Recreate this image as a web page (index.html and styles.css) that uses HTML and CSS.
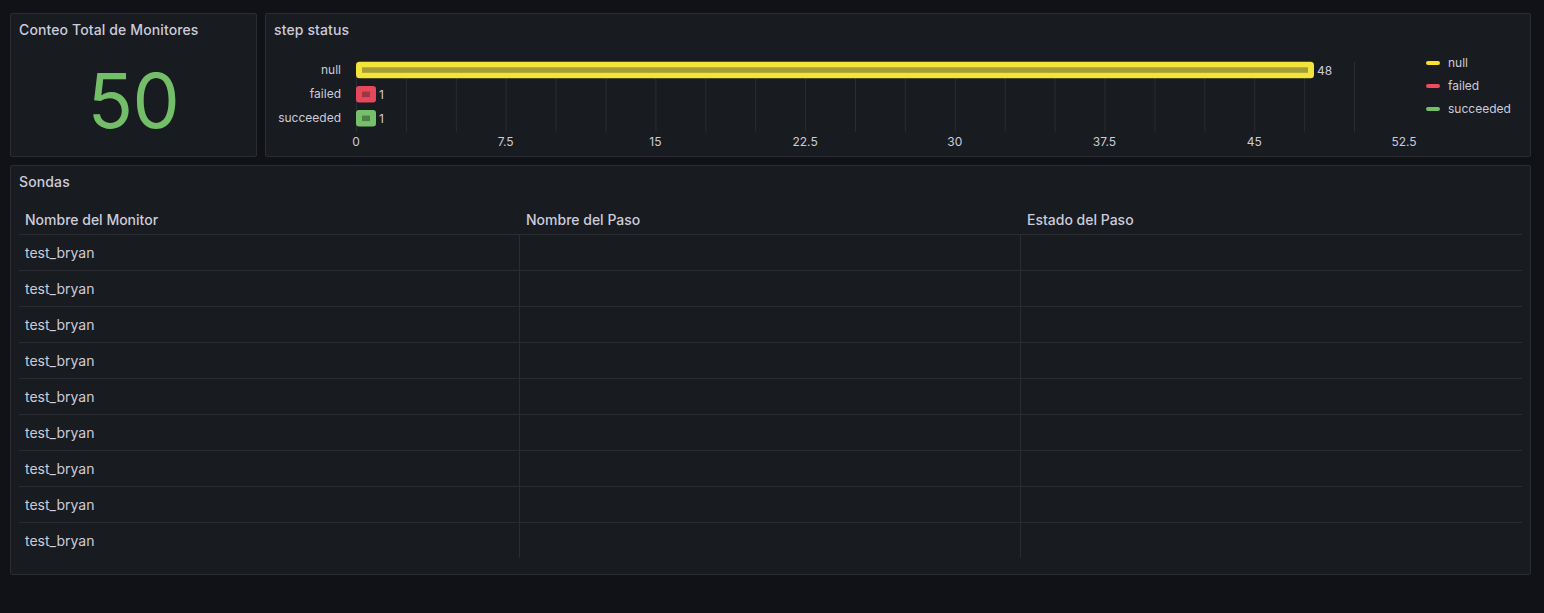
FILE: index.html
```html
<!DOCTYPE html>
<html lang="es">
<head>
<meta charset="utf-8">
<title>Dashboard</title>
<link rel="stylesheet" href="styles.css">
</head>
<body>
<div class="dash">
  <div class="row-top">
    <section class="panel stat-panel">
      <header class="panel-header"><h2 class="panel-title">Conteo Total de Monitores</h2></header>
      <div class="stat-body"><span class="stat-value">50</span></div>
    </section>
    <section class="panel chart-panel">
      <header class="panel-header"><h2 class="panel-title">step status</h2></header>
      <div class="chart-body">
        <svg class="chart" width="1152" height="110" viewBox="0 0 1152 110">
          <g class="grid" stroke="#2a2c31" stroke-width="1">
            <line x1="82.5" y1="16" x2="82.5" y2="86"/>
            <line x1="132.4" y1="16" x2="132.4" y2="86"/>
            <line x1="182.3" y1="16" x2="182.3" y2="86"/>
            <line x1="232.2" y1="16" x2="232.2" y2="86"/>
            <line x1="282.1" y1="16" x2="282.1" y2="86"/>
            <line x1="332" y1="16" x2="332" y2="86"/>
            <line x1="381.9" y1="16" x2="381.9" y2="86"/>
            <line x1="431.8" y1="16" x2="431.8" y2="86"/>
            <line x1="481.7" y1="16" x2="481.7" y2="86"/>
            <line x1="531.6" y1="16" x2="531.6" y2="86"/>
            <line x1="581.5" y1="16" x2="581.5" y2="86"/>
            <line x1="631.4" y1="16" x2="631.4" y2="86"/>
            <line x1="681.3" y1="16" x2="681.3" y2="86"/>
            <line x1="731.2" y1="16" x2="731.2" y2="86"/>
            <line x1="781.1" y1="16" x2="781.1" y2="86"/>
            <line x1="831" y1="16" x2="831" y2="86"/>
            <line x1="880.9" y1="16" x2="880.9" y2="86"/>
            <line x1="930.8" y1="16" x2="930.8" y2="86"/>
            <line x1="980.7" y1="16" x2="980.7" y2="86"/>
            <line x1="1030.6" y1="16" x2="1030.6" y2="86"/>
            <line x1="1080.5" y1="16" x2="1080.5" y2="86"/>
          </g>
          <g class="ylabels">
            <text x="67" y="28" text-anchor="end">null</text>
            <text x="67" y="52" text-anchor="end">failed</text>
            <text x="67" y="76" text-anchor="end">succeeded</text>
          </g>
          <g class="bars">
            <rect x="82" y="15.7" width="958" height="16.6" rx="3.5" fill="#f2e43a"/>
            <rect x="88" y="21.3" width="946" height="5.5" fill="#a39c37"/>
            <rect x="82" y="40" width="20" height="16.6" rx="3" fill="#e5485b"/>
            <rect x="88" y="45.6" width="8" height="5.5" fill="#9c3846"/>
            <rect x="82" y="64" width="20" height="16.6" rx="3" fill="#75c06a"/>
            <rect x="88" y="69.6" width="8" height="5.5" fill="#4f7f49"/>
          </g>
          <g class="vlabels">
            <text x="1043" y="28.5">48</text>
            <text x="105" y="52.5">1</text>
            <text x="105" y="76.5">1</text>
          </g>
          <g class="xlabels" text-anchor="middle">
            <text x="82" y="100">0</text>
            <text x="231.7" y="100">7.5</text>
            <text x="381.4" y="100">15</text>
            <text x="531.1" y="100">22.5</text>
            <text x="680.8" y="100">30</text>
            <text x="830.5" y="100">37.5</text>
            <text x="980.2" y="100">45</text>
            <text x="1130" y="100">52.5</text>
          </g>
        </svg>
        <ul class="legend">
          <li class="legend-item"><span class="swatch swatch-yellow"></span>null</li>
          <li class="legend-item"><span class="swatch swatch-red"></span>failed</li>
          <li class="legend-item"><span class="swatch swatch-green"></span>succeeded</li>
        </ul>
      </div>
    </section>
  </div>
  <section class="panel table-panel">
    <header class="panel-header"><h2 class="panel-title">Sondas</h2></header>
    <div class="table-body">
      <div class="table">
        <div class="thead">
          <div class="th">Nombre del Monitor</div>
          <div class="th">Nombre del Paso</div>
          <div class="th">Estado del Paso</div>
        </div>
        <div class="tr"><div class="td">test_bryan</div><div class="td"></div><div class="td"></div></div>
        <div class="tr"><div class="td">test_bryan</div><div class="td"></div><div class="td"></div></div>
        <div class="tr"><div class="td">test_bryan</div><div class="td"></div><div class="td"></div></div>
        <div class="tr"><div class="td">test_bryan</div><div class="td"></div><div class="td"></div></div>
        <div class="tr"><div class="td">test_bryan</div><div class="td"></div><div class="td"></div></div>
        <div class="tr"><div class="td">test_bryan</div><div class="td"></div><div class="td"></div></div>
        <div class="tr"><div class="td">test_bryan</div><div class="td"></div><div class="td"></div></div>
        <div class="tr"><div class="td">test_bryan</div><div class="td"></div><div class="td"></div></div>
        <div class="tr"><div class="td">test_bryan</div><div class="td"></div><div class="td"></div></div>
      </div>
    </div>
  </section>
</div>
</body>
</html>
```
FILE: styles.css
```css
* { box-sizing: border-box; }
html, body {
  margin: 0;
  background: #111217;
  color: #ccccdc;
  font-family: Inter, "Noto Sans", "Liberation Sans", sans-serif;
}
body { padding: 13px 13px 0 10px; }
.dash {
  display: flex;
  flex-direction: column;
  gap: 8px;
}
.row-top {
  display: flex;
  gap: 8px;
  height: 144px;
}
.panel {
  background: #181b1f;
  border: 1px solid #2a2c31;
  border-radius: 2px;
  display: flex;
  flex-direction: column;
}
.panel-header {
  height: 32px;
  padding: 0 8px 2px;
  display: flex;
  align-items: center;
  flex: none;
}
.panel-title {
  margin: 0;
  font-size: 14px;
  font-weight: 500;
  letter-spacing: 0.12px;
  color: #ccccdc;
  white-space: nowrap;
}
.stat-panel { width: 247px; flex: none; }
.stat-body {
  flex: 1;
  display: flex;
  align-items: center;
  justify-content: center;
  padding-bottom: 2px;
}
.stat-value {
  font-size: 75px;
  font-weight: 400;
  color: #73bf69;
  line-height: 1;
  letter-spacing: -0.5px;
}
.chart-panel { flex: 1; min-width: 0; }
.chart-body {
  flex: 1;
  display: flex;
  padding: 0 8px;
}
.chart { display: block; flex: none; }
.chart text {
  font-family: Inter, "Noto Sans", "Liberation Sans", sans-serif;
  font-size: 12px;
  fill: #ccccdc;
}
.legend {
  list-style: none;
  margin: 0;
  padding: 9px 0 0 0;
  display: flex;
  flex-direction: column;
  gap: 7px;
}
.legend-item {
  display: flex;
  align-items: center;
  gap: 8px;
  font-size: 12px;
  line-height: 16px;
  color: #ccccdc;
}
.swatch {
  width: 14px;
  height: 4px;
  border-radius: 2px;
  display: inline-block;
}
.swatch-yellow { background: #fade2a; }
.swatch-red { background: #f2495c; }
.swatch-green { background: #73bf69; }

.table-panel { height: 410px; }
.table-body {
  flex: 1;
  padding: 0 8px 16px;
}
.table { display: flex; flex-direction: column; }
.thead, .tr {
  display: grid;
  grid-template-columns: 500px 501px 1fr;
}
.thead { height: 36px; }
.th {
  display: flex;
  align-items: center;
  padding: 6px 6px 0 6px;
  font-size: 14px;
  font-weight: 500;
  color: #ccccdc;
}
.th + .th { padding-left: 7px; }
.tr {
  height: 36px;
  border-top: 1px solid #2a2c31;
}
.td {
  display: flex;
  align-items: center;
  padding: 0 6px;
  font-size: 14px;
  color: #ccccdc;
}
.td + .td { border-left: 1px solid #2a2c31; }
```
